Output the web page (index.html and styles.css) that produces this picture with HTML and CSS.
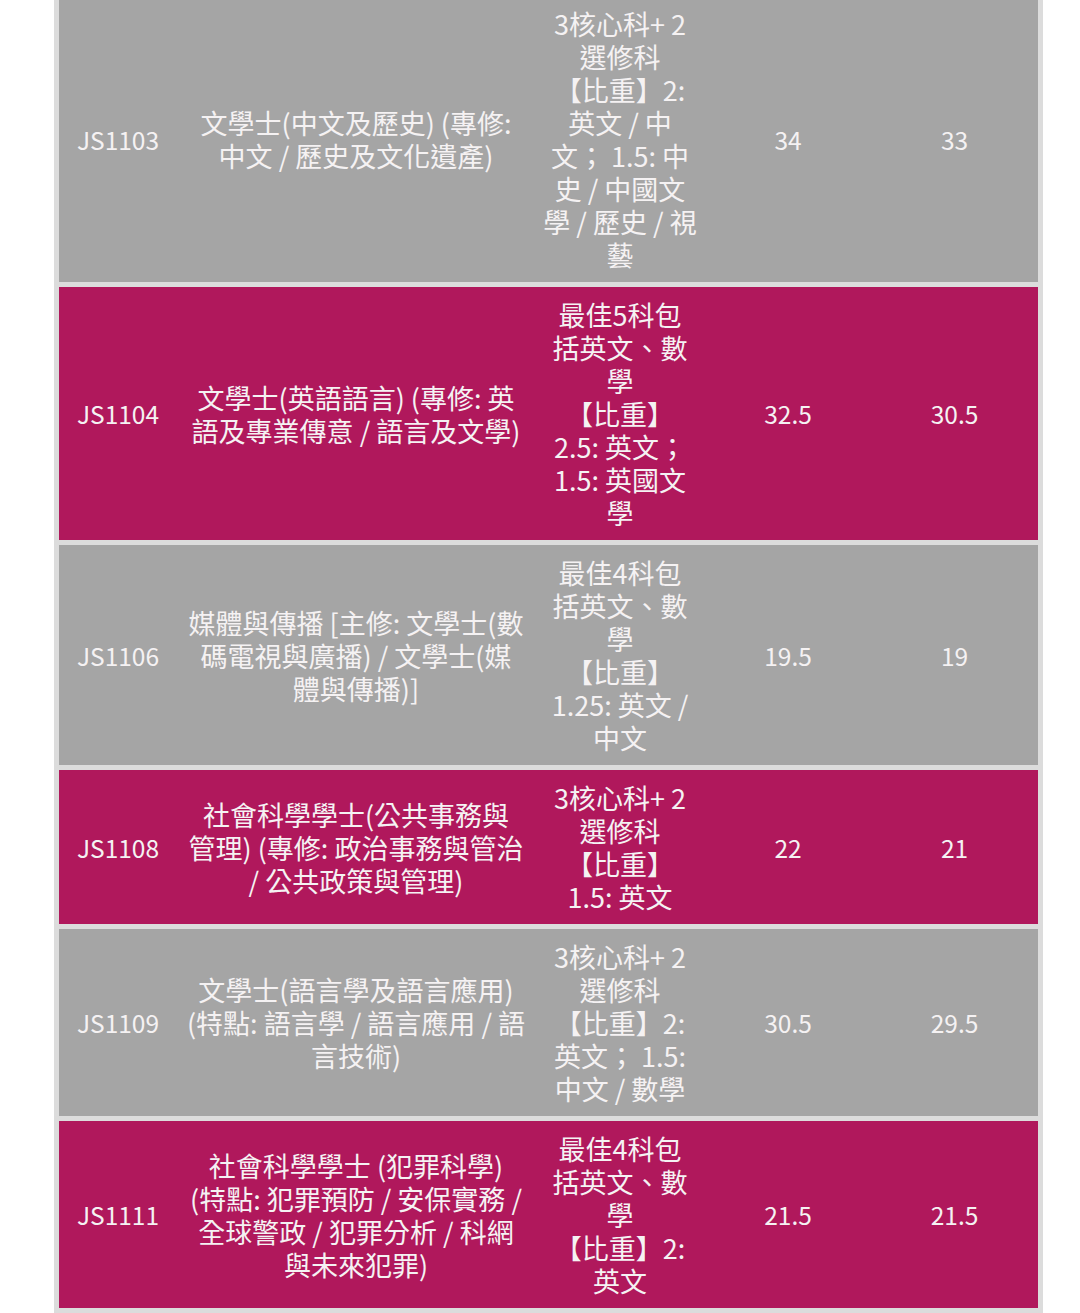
FILE: index.html
```html
<!DOCTYPE html>
<html lang="zh-Hant">
<head>
<meta charset="utf-8">
<title>入學分數</title>
<link rel="stylesheet" href="styles.css">
</head>
<body>
<table class="scores">
  <colgroup>
    <col class="c-code">
    <col class="c-name">
    <col class="c-req">
    <col class="c-num">
    <col class="c-num2">
  </colgroup>
  <tbody>
    <tr class="row-gray">
      <td class="latin">JS1103</td>
      <td>文學士(中文及歷史) (專修:<br>中文 / 歷史及文化遺產)</td>
      <td>3核心科+ 2<br>選修科<br>【比重】2:<br>英文 / 中<br>文； 1.5: 中<br>史 / 中國文<br>學 / 歷史 / 視<br>藝</td>
      <td class="latin">34</td>
      <td class="latin">33</td>
    </tr>
    <tr class="row-pink">
      <td class="latin">JS1104</td>
      <td>文學士(英語語言) (專修: 英<br>語及專業傳意 / 語言及文學)</td>
      <td>最佳5科包<br>括英文、數<br>學<br>【比重】<br>2.5: 英文；<br>1.5: 英國文<br>學</td>
      <td class="latin">32.5</td>
      <td class="latin">30.5</td>
    </tr>
    <tr class="row-gray">
      <td class="latin">JS1106</td>
      <td>媒體與傳播 [主修: 文學士(數<br>碼電視與廣播) / 文學士(媒<br>體與傳播)]</td>
      <td>最佳4科包<br>括英文、數<br>學<br>【比重】<br>1.25: 英文 /<br>中文</td>
      <td class="latin">19.5</td>
      <td class="latin">19</td>
    </tr>
    <tr class="row-pink">
      <td class="latin">JS1108</td>
      <td>社會科學學士(公共事務與<br>管理) (專修: 政治事務與管治<br>/ 公共政策與管理)</td>
      <td>3核心科+ 2<br>選修科<br>【比重】<br>1.5: 英文</td>
      <td class="latin">22</td>
      <td class="latin">21</td>
    </tr>
    <tr class="row-gray">
      <td class="latin">JS1109</td>
      <td>文學士(語言學及語言應用)<br>(特點: 語言學 / 語言應用 / 語<br>言技術)</td>
      <td>3核心科+ 2<br>選修科<br>【比重】2:<br>英文； 1.5:<br>中文 / 數學</td>
      <td class="latin">30.5</td>
      <td class="latin">29.5</td>
    </tr>
    <tr class="row-pink">
      <td class="latin">JS1111</td>
      <td>社會科學學士 (犯罪科學)<br>(特點: 犯罪預防 / 安保實務 /<br>全球警政 / 犯罪分析 / 科網<br>與未來犯罪)</td>
      <td>最佳4科包<br>括英文、數<br>學<br>【比重】2:<br>英文</td>
      <td class="latin">21.5</td>
      <td class="latin">21.5</td>
    </tr>
  </tbody>
</table>
</body>
</html>
```

FILE: styles.css
```css
html, body {
  margin: 0;
  padding: 0;
  background: #ffffff;
}

body {
  font-family: "Noto Sans CJK TC", "Noto Sans", sans-serif;
  font-size: 27px;
  line-height: 33px;
  color: #ffffff;
}

.scores {
  box-sizing: border-box;
  width: 989px;
  margin: -9px 0 0 54px;
  padding: 0 5px;
  table-layout: fixed;
  border-collapse: separate;
  border-spacing: 0 5px;
  background: #dcdcdc;
}

.c-code { width: 118px; }
.c-name { width: 358px; }
.c-req  { width: 170px; }
.c-num  { width: 166px; }
.c-num2 { width: 167px; }

.scores td {
  padding: 11px 4px;
  text-align: center;
  vertical-align: middle;
  white-space: nowrap;
  color: #f5f2f3;
}

.scores td.latin {
  font-size: 24.5px;
}

.row-gray td {
  background: #a5a5a5;
}

.row-pink td {
  background: #b0185c;
}
```
